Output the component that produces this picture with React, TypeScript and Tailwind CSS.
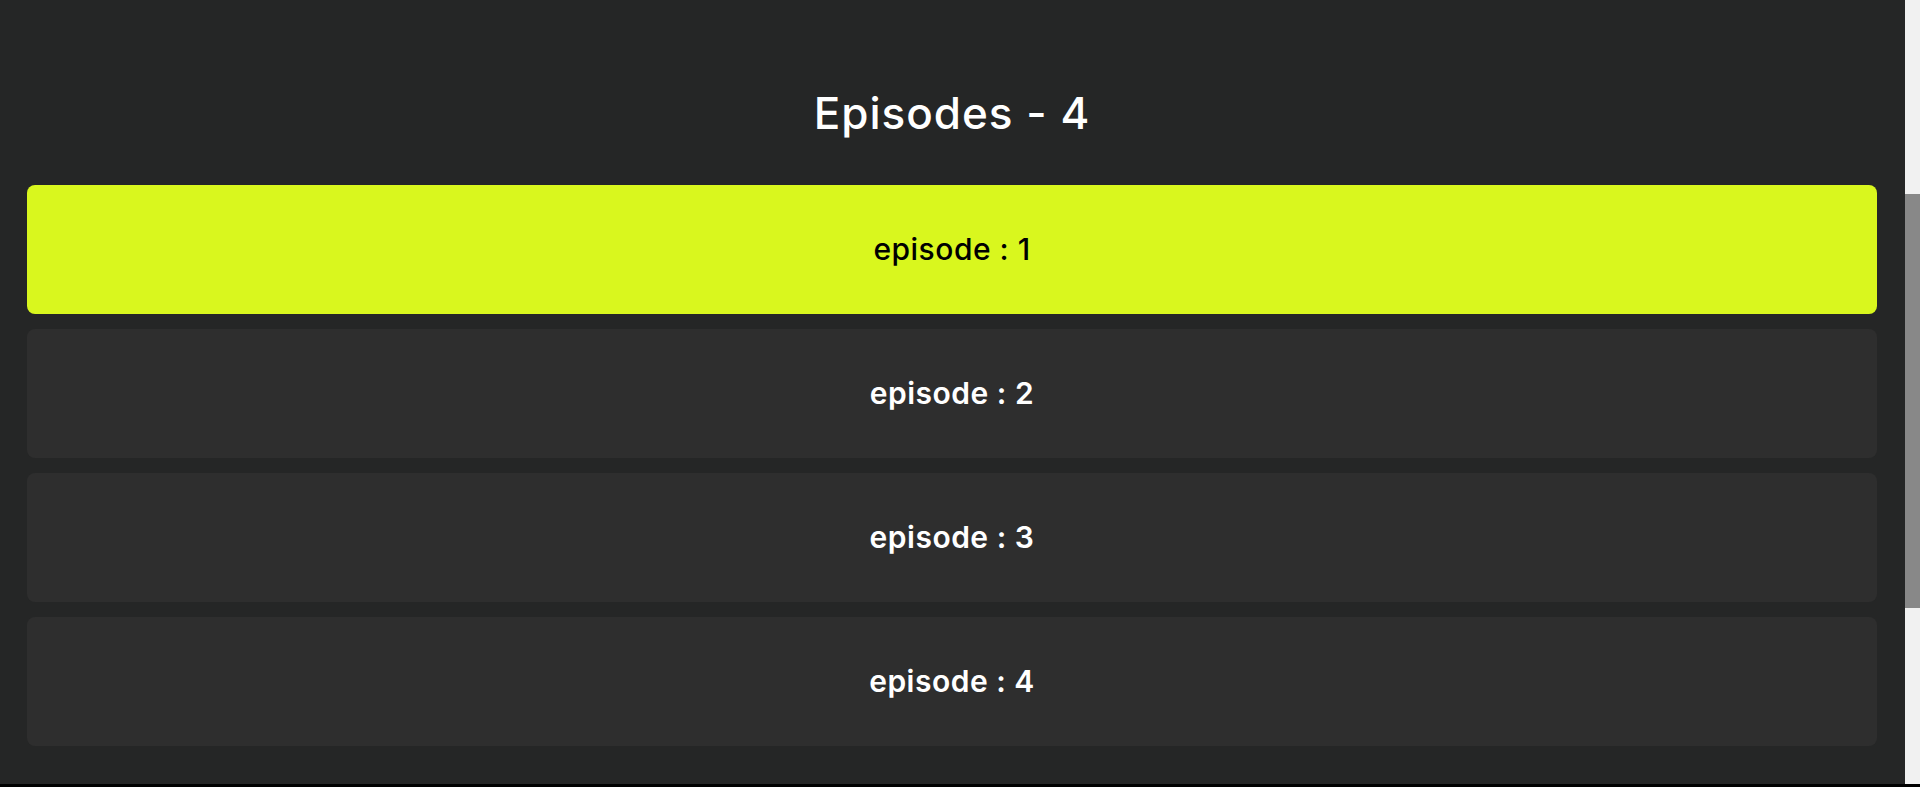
const episodes = [1, 2, 3, 4];

function EpisodeCard({ n, active }: { n: number; active: boolean }) {
  return (
    <button
      type="button"
      className={
        active
          ? 'flex h-[129px] w-full items-center justify-center rounded-lg bg-[#d9f71e] text-[30px] font-medium tracking-[0.5px] text-black'
          : 'flex h-[129px] w-full items-center justify-center rounded-lg bg-[#2e2e2e] text-[30px] font-semibold tracking-[0.5px] text-white'
      }
    >
      episode : {n}
    </button>
  );
}

export default function App() {
  return (
    <div className="flex h-[787px] w-full flex-col overflow-hidden bg-black font-['Inter',sans-serif]">
      <div className="flex min-h-0 flex-1">
        <main className="flex-1 bg-[#252626] pl-[27px] pr-[28px]">
          <h1 className="pt-[91px] pb-[50px] text-center text-[44px] font-medium leading-none tracking-[1px] text-white">
            Episodes - 4
          </h1>
          <div className="flex flex-col gap-[15px]">
            {episodes.map((n) => (
              <EpisodeCard key={n} n={n} active={n === 1} />
            ))}
          </div>
        </main>
        {/* fake scrollbar */}
        <div className="flex w-[15px] flex-col bg-[#f1f1f1]">
          <div className="mt-[194px] h-[414px] bg-[#888888]" />
        </div>
      </div>
      <div className="h-[3px] bg-black" />
    </div>
  );
}
